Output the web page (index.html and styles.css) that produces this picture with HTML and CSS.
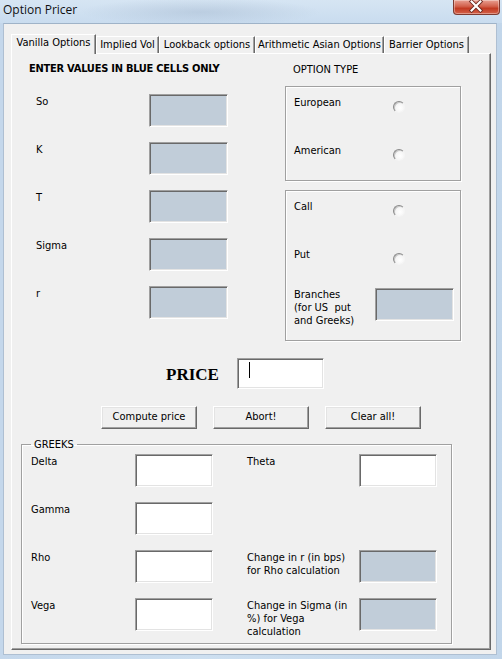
FILE: index.html
```html
<!DOCTYPE html>
<html>
<head>
<meta charset="utf-8">
<title>Option Pricer</title>
<link rel="stylesheet" href="styles.css">
</head>
<body>
<div class="window">
  <div class="titlebar">
    <span class="title">Option Pricer</span>
    <div class="close">
      <svg width="47" height="14" viewBox="0 0 47 14">
        <path d="M19 2.5 L28 11.5 M28 2.5 L19 11.5" stroke="#6b2a22" stroke-width="4" stroke-linecap="square"/>
        <path d="M19 2.5 L28 11.5 M28 2.5 L19 11.5" stroke="#ffffff" stroke-width="2.2" stroke-linecap="square"/>
      </svg>
    </div>
  </div>
  <div class="client">
    <div class="tabs">
      <div class="tab active w-vanilla">Vanilla Options</div>
      <div class="tab w-implied">Implied Vol</div>
      <div class="tab w-lookback">Lookback options</div>
      <div class="tab w-asian">Arithmetic Asian Options</div>
      <div class="tab w-barrier">Barrier Options</div>
    </div>
    <div class="panel">
      <div class="top">
        <div class="inputs">
          <div class="heading">ENTER VALUES IN BLUE CELLS ONLY</div>
          <div class="fields">
            <div class="field"><span class="flabel">So</span><span class="box blue"></span></div>
            <div class="field"><span class="flabel">K</span><span class="box blue"></span></div>
            <div class="field"><span class="flabel">T</span><span class="box blue"></span></div>
            <div class="field"><span class="flabel">Sigma</span><span class="box blue"></span></div>
            <div class="field"><span class="flabel">r</span><span class="box blue"></span></div>
          </div>
        </div>
        <div class="options">
          <div class="opt-title">OPTION TYPE</div>
          <div class="frame frame-style">
            <div class="opt"><span class="olabel">European</span><span class="radio"></span></div>
            <div class="opt"><span class="olabel">American</span><span class="radio"></span></div>
          </div>
          <div class="frame frame-kind">
            <div class="opt"><span class="olabel">Call</span><span class="radio"></span></div>
            <div class="opt"><span class="olabel">Put</span><span class="radio"></span></div>
            <div class="branches"><span class="blabel">Branches<br>(for US&nbsp; put<br>and Greeks)</span><span class="box blue"></span></div>
          </div>
        </div>
      </div>
      <div class="price-row">
        <span class="price-label">PRICE</span>
        <span class="box white price-box"><span class="caret"></span></span>
      </div>
      <div class="buttons">
        <div class="btn">Compute price</div>
        <div class="btn">Abort!</div>
        <div class="btn">Clear all!</div>
      </div>
      <fieldset class="greeks">
        <legend>GREEKS</legend>
        <div class="greek-grid">
          <span class="glabel">Delta</span><span class="box white"></span>
          <span class="glabel">Theta</span><span class="box white"></span>

          <span class="glabel">Gamma</span><span class="box white"></span>
          <span class="glabel"></span><span class="empty"></span>

          <span class="glabel">Rho</span><span class="box white"></span>
          <span class="glabel">Change in r (in bps)<br>for Rho calculation</span><span class="box blue"></span>

          <span class="glabel">Vega</span><span class="box white"></span>
          <span class="glabel">Change in Sigma (in<br>%) for Vega<br>calculation</span><span class="box blue"></span>
        </div>
      </fieldset>
    </div>
  </div>
</div>
</body>
</html>
```

FILE: styles.css
```css
* { box-sizing: border-box; }

html, body {
  margin: 0;
  padding: 0;
}

body {
  width: 502px;
  height: 659px;
  overflow: hidden;
  background: linear-gradient(90deg, #c4d7eb 0%, #cddff0 40%, #c2d6ea 100%);
  font-family: "DejaVu Sans Condensed", "DejaVu Sans", sans-serif;
  font-size: 11px;
  color: #000;
}

.window {
  display: flex;
  flex-direction: column;
}

/* ---------- title bar ---------- */
.titlebar {
  height: 23px;
  display: flex;
  align-items: flex-start;
  background:
    radial-gradient(ellipse 120px 14px at 200px 12px, rgba(150,170,195,0.35), rgba(150,170,195,0) 100%),
    linear-gradient(180deg, #d6e5f3 0%, #c9dcef 100%);
}

.title {
  font-family: "Open Sans", "Noto Sans", sans-serif;
  font-size: 12px;
  line-height: 16px;
  padding: 2px 0 0 3px;
  color: #111;
}

.close {
  margin-left: auto;
  margin-right: 2px;
  width: 47px;
  height: 15px;
  border: 1px solid #7e3a30;
  border-top: none;
  border-radius: 0 0 4px 4px;
  background: linear-gradient(180deg, #e8a092 0%, #d2614c 45%, #c23a22 60%, #d4624a 100%);
  box-shadow: inset 0 0 0 1px rgba(255,255,255,0.35);
  display: flex;
}

.close svg { display: block; margin: -1px 0 0 -1px; }

/* ---------- client area ---------- */
.client {
  margin: 0 5px 0 3px;
  height: 632px;
  background: #f0f0f0;
  border: 1px solid #aebfd2;
  border-top-color: #9fb3c8;
  padding: 10px 0 0 7px;
}

.tabs {
  display: flex;
  align-items: flex-end;
  height: 19px;
  position: relative;
  z-index: 1;
}

.tab {
  height: 17px;
  border: 1px solid #fff;
  border-bottom: none;
  border-right: 1px solid #696969;
  box-shadow: inset -1px 0 0 #a0a0a0;
  background: #f0f0f0;
  text-align: center;
  line-height: 15px;
  white-space: nowrap;
}

.tab.active {
  height: 20px;
  margin-bottom: -1px;
  line-height: 16px;
}

.w-vanilla { width: 85px; }
.w-implied { width: 63px; }
.w-lookback { width: 96px; }
.w-asian { width: 129px; }
.w-barrier { width: 85px; }

.panel {
  width: 480px;
  height: 597px;
  border: 1px solid;
  border-color: #fff #696969 #696969 #fff;
  box-shadow: inset -1px -1px 0 #a0a0a0;
  background: #f0f0f0;
}

/* ---------- top section ---------- */
.top {
  display: flex;
  padding-top: 8px;
}

.inputs {
  width: 273px;
  padding-left: 17px;
}

.heading {
  font-weight: bold;
  line-height: 13px;
  white-space: nowrap;
  letter-spacing: -0.25px;
}

.fields {
  margin-top: 19px;
  display: flex;
  flex-direction: column;
  gap: 15px;
}

.field {
  display: flex;
  align-items: flex-start;
}

.flabel {
  width: 120px;
  padding-left: 7px;
  padding-top: 1px;
  line-height: 13px;
}

.box {
  display: block;
  width: 79px;
  height: 33px;
  border: 1px solid;
  border-color: #a0a0a0 #fff #fff #a0a0a0;
  box-shadow: inset 1px 1px 0 #696969, inset -1px -1px 0 #e3e3e3;
  flex: none;
}

.box.blue { background: #c1cdd9; }
.box.white { background: #fff; }

.options {
  width: 176px;
}

.opt-title {
  padding: 1px 0 0 8px;
  line-height: 13px;
}

.frame {
  border: 1px solid #a0a0a0;
  box-shadow: 1px 1px 0 #fff, inset 1px 1px 0 #fff;
  padding: 9px 0 0 8px;
}

.frame-style {
  margin-top: 10px;
  height: 95px;
}

.frame-kind {
  margin-top: 9px;
  height: 151px;
}

.opt {
  display: flex;
  align-items: flex-start;
}

.opt + .opt { margin-top: 31px; }

.olabel {
  width: 99px;
  line-height: 13px;
}

.radio {
  width: 12px;
  height: 12px;
  margin-top: 5px;
  border-radius: 50%;
  border: 1px solid;
  border-color: #8a8a8a #f4f4f4 #f4f4f4 #8a8a8a;
  background: radial-gradient(circle at 60% 60%, #ffffff 0%, #f2f2f2 70%, #dcdcdc 100%);
  box-shadow: inset 1px 1px 0 #c8c8c8;
}

.branches {
  display: flex;
  align-items: flex-start;
  margin-top: 23px;
}

.blabel {
  width: 81px;
  line-height: 13px;
}

/* ---------- price ---------- */
.price-row {
  display: flex;
  align-items: center;
  margin-top: 17px;
  padding-left: 154px;
}

.price-label {
  width: 71px;
  font-family: "Liberation Serif", serif;
  font-weight: bold;
  font-size: 17px;
  padding-top: 3px;
}

.price-box {
  width: 87px;
  height: 31px;
  position: relative;
}

.caret {
  position: absolute;
  left: 11px;
  top: 3px;
  width: 1px;
  height: 16px;
  background: #000;
}

/* ---------- buttons ---------- */
.buttons {
  display: flex;
  gap: 16px;
  margin-top: 17px;
  padding-left: 89px;
}

.btn {
  width: 96px;
  height: 23px;
  border: 1px solid;
  border-color: #fff #696969 #696969 #fff;
  box-shadow: inset -1px -1px 0 #a0a0a0, inset 1px 1px 0 #e3e3e3;
  background: #f0f0f0;
  text-align: center;
  line-height: 20px;
}

/* ---------- greeks ---------- */
.greeks {
  margin: 9px 0 0 9px;
  width: 431px;
  height: 206px;
  border: 1px solid #a0a0a0;
  box-shadow: 1px 1px 0 #fff, inset 1px 1px 0 #fff;
  padding: 0 0 0 9px;
  min-width: 0;
}

.greeks legend {
  padding: 0 3px;
  margin-left: 0;
  line-height: 13px;
}

.greek-grid {
  margin-top: 3px;
  display: grid;
  grid-template-columns: 104px 112px 112px 78px;
  grid-auto-rows: 33px;
  row-gap: 15px;
}

.glabel {
  line-height: 13px;
  padding-top: 1px;
  white-space: nowrap;
}

.greek-grid .box { width: 78px; }
```
